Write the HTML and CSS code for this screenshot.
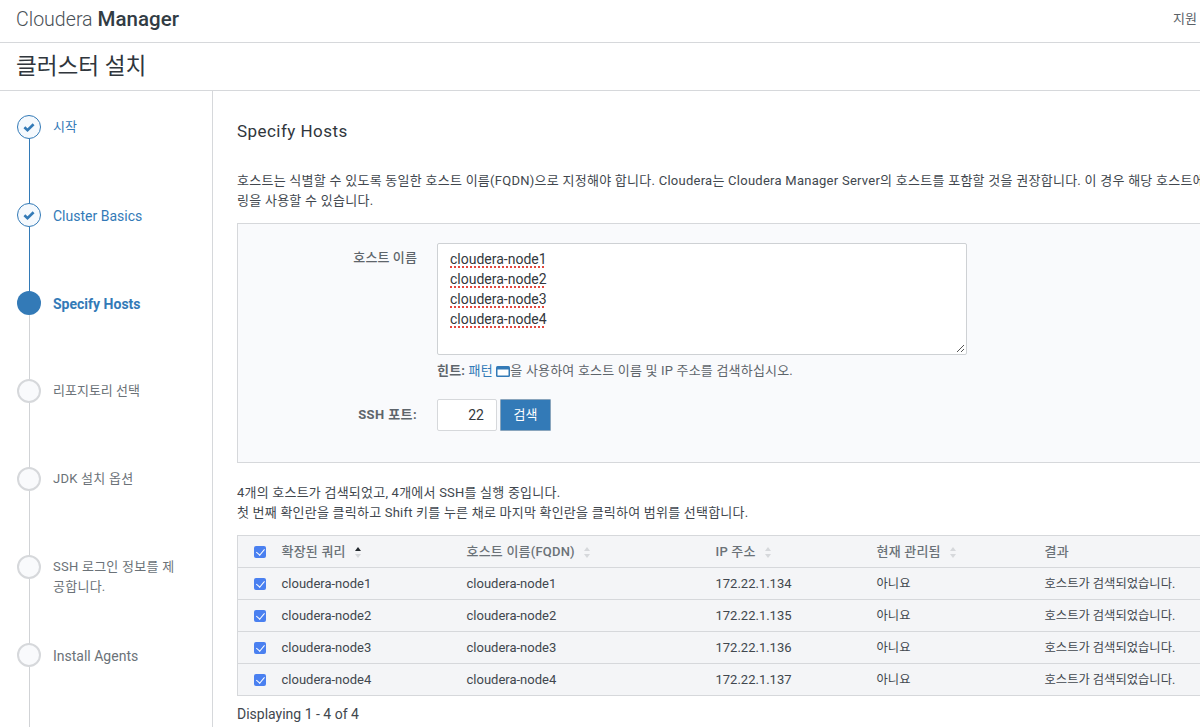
FILE: index.html
```html
<!DOCTYPE html>
<html lang="ko">
<head>
<meta charset="utf-8">
<title>Cloudera Manager</title>
<link rel="stylesheet" href="styles.css">
</head>
<body>
<header class="topbar">
  <div class="logo"><span class="logo-light">Cloudera</span> <span class="logo-bold">Manager</span></div>
  <div class="support">지원</div>
</header>
<div class="titlebar"><h1>클러스터 설치</h1></div>
<div class="layout">
  <nav class="steps">
    <div class="step done">
      <span class="dot"><svg viewBox="0 0 12 12" width="12" height="12"><path d="M1.4 6.2 4.5 9.2 10.6 3.2" fill="none" stroke="#337ab7" stroke-width="2.6"/></svg></span>
      <span class="label">시작</span>
    </div>
    <div class="step done">
      <span class="dot"><svg viewBox="0 0 12 12" width="12" height="12"><path d="M1.4 6.2 4.5 9.2 10.6 3.2" fill="none" stroke="#337ab7" stroke-width="2.6"/></svg></span>
      <span class="label latin">Cluster Basics</span>
    </div>
    <div class="step current">
      <span class="dot"></span>
      <span class="label latin">Specify Hosts</span>
    </div>
    <div class="step"><span class="dot"></span><span class="label">리포지토리 선택</span></div>
    <div class="step"><span class="dot"></span><span class="label mixed">JDK 설치 옵션</span></div>
    <div class="step"><span class="dot"></span><span class="label mixed">SSH 로그인 정보를 제공합니다.</span></div>
    <div class="step"><span class="dot"></span><span class="label latin">Install Agents</span></div>
    <div class="step"><span class="dot"></span><span class="label"></span></div>
  </nav>
  <main class="content">
    <h2>Specify Hosts</h2>
    <p class="intro">호스트는 식별할 수 있도록 동일한 호스트 이름(FQDN)으로 지정해야 합니다. Cloudera는 Cloudera Manager Server의 호스트를 포함할 것을 권장합니다. 이 경우 해당 호스트에서 제공하는 미러<br>링을 사용할 수 있습니다.</p>
    <section class="panel">
      <div class="form-row">
        <label class="form-label host-label">호스트 이름</label>
        <div class="form-field">
          <div class="textarea">
            <div><span class="spell">cloudera-node1</span></div>
            <div><span class="spell">cloudera-node2</span></div>
            <div><span class="spell">cloudera-node3</span></div>
            <div><span class="spell">cloudera-node4</span></div>
            <svg class="grip" viewBox="0 0 10 10" width="10" height="10"><path d="M9 2 2 9M9 6 6 9" stroke="#555" stroke-width="1" fill="none"/></svg>
          </div>
          <p class="hint"><b>힌트:</b> <a>패턴</a> <svg class="win" viewBox="0 0 14 11" width="14" height="11"><rect x="0" y="0" width="14" height="11" rx="1.5" fill="#337ab7"/><rect x="1.5" y="3.5" width="11" height="6" fill="#fff"/></svg>을 사용하여 호스트 이름 및 IP 주소를 검색하십시오.</p>
        </div>
      </div>
      <div class="form-row port-row">
        <label class="form-label">SSH 포트:</label>
        <div class="port-input">22</div>
        <button class="search">검색</button>
      </div>
    </section>
    <p class="found">4개의 호스트가 검색되었고, 4개에서 SSH를 실행 중입니다.<br>첫 번째 확인란을 클릭하고 Shift 키를 누른 채로 마지막 확인란을 클릭하여 범위를 선택합니다.</p>
    <table class="hosts">
      <colgroup><col class="c0"><col class="c1"><col class="c2"><col class="c3"><col class="c4"><col class="c5"></colgroup>
      <thead>
        <tr>
          <th class="check"><input type="checkbox" checked></th>
          <th>확장된 쿼리 <span class="sort asc"></span></th>
          <th>호스트 이름(FQDN) <span class="sort"></span></th>
          <th>IP 주소 <span class="sort"></span></th>
          <th>현재 관리됨 <span class="sort"></span></th>
          <th>결과</th>
        </tr>
      </thead>
      <tbody>
        <tr><td class="check"><input type="checkbox" checked></td><td>cloudera-node1</td><td>cloudera-node1</td><td>172.22.1.134</td><td class="ko">아니요</td><td class="ko">호스트가 검색되었습니다.</td></tr>
        <tr><td class="check"><input type="checkbox" checked></td><td>cloudera-node2</td><td>cloudera-node2</td><td>172.22.1.135</td><td class="ko">아니요</td><td class="ko">호스트가 검색되었습니다.</td></tr>
        <tr><td class="check"><input type="checkbox" checked></td><td>cloudera-node3</td><td>cloudera-node3</td><td>172.22.1.136</td><td class="ko">아니요</td><td class="ko">호스트가 검색되었습니다.</td></tr>
        <tr><td class="check"><input type="checkbox" checked></td><td>cloudera-node4</td><td>cloudera-node4</td><td>172.22.1.137</td><td class="ko">아니요</td><td class="ko">호스트가 검색되었습니다.</td></tr>
      </tbody>
    </table>
    <p class="displaying">Displaying 1 - 4 of 4</p>
  </main>
</div>
</body>
</html>
```

FILE: styles.css
```css
* { box-sizing: border-box; }
html, body { margin: 0; height: 727px; overflow: hidden; }
body {
  font-family: Roboto, "Noto Sans CJK KR", sans-serif;
  font-size: 13px;
  line-height: 20px;
  color: #41474e;
  background: #fff;
}
.topbar {
  height: 43px;
  border-bottom: 1px solid #d6d8db;
  display: flex;
  justify-content: space-between;
  padding: 0 3px 0 16px;
}
.logo { font-size: 20px; line-height: 38px; color: #4a5157; white-space: nowrap; }
.logo-light { font-weight: 300; font-size: 19.6px; }
.logo-bold { font-weight: 500; font-size: 20.5px; color: #323c44; }
.support { font-size: 13px; line-height: 38px; color: #5a6167; }
.titlebar { height: 48px; border-bottom: 1px solid #d6d8db; padding-left: 16px; }
.titlebar h1 { margin: 0; font-size: 22.6px; line-height: 47px; font-weight: 400; color: #30363c; }
.layout { display: flex; height: 636px; }
.steps { width: 213px; flex: none; border-right: 1px solid #d6d8db; padding-top: 24px; overflow: hidden; }
.step { position: relative; height: 88px; display: flex; padding-left: 17px; gap: 12px; color: #6b7278; }
.step::after {
  content: "";
  position: absolute;
  left: 29px;
  top: 24px;
  bottom: -1px;
  width: 1px;
  background: #d1d3d6;
}
.step.done::after { background: #337ab7; }
.dot {
  width: 24px;
  height: 24px;
  flex: none;
  border-radius: 50%;
  border: 2px solid #d6d8db;
  background: #f9fafc;
  display: flex;
  align-items: center;
  justify-content: center;
}
.done .dot { border: 1.5px solid #337ab7; background: #f5f9fd; }
.current .dot { border: 0; background: #337ab7; }
.label { width: 130px; font-size: 13px; line-height: 20px; margin-top: 2px; }
.label.latin { font-size: 14px; margin-top: 3px; }
.label.mixed { letter-spacing: 0.25px; margin-top: 2px; }
.done .label { color: #337ab7; }
.current .label { color: #337ab7; font-weight: 700; }
.content { flex: none; width: 1100px; padding-left: 24px; padding-top: 29px; }
.content h2 { margin: 0; font-size: 17px; line-height: 22px; font-weight: 400; color: #30363c; letter-spacing: 0.45px; }
.intro { margin: 29px 0 0; white-space: nowrap; color: #41474e; line-height: 20px; letter-spacing: 0.26px; }
.panel {
  margin-top: 12px;
  height: 240px;
  background: #f9fafc;
  border: 1px solid #d6d8db;
  padding-top: 19px;
}
.form-row { display: flex; }
.form-label { width: 179px; text-align: right; font-weight: 500; color: #5e656b; flex: none; }
.host-label { line-height: 20px; margin-top: 5px; letter-spacing: 0.1px; }
.form-field { margin-left: 20px; }
.textarea {
  position: relative;
  width: 530px;
  height: 112px;
  background: #fff;
  border: 1px solid #ced1d4;
  border-radius: 2px;
  padding: 5px 12px;
  font-size: 14px;
  line-height: 20px;
  color: #33383d;
}
.spell { text-decoration: underline dotted #e0483e 1.5px; text-underline-offset: 2px; }
.grip { position: absolute; right: 1px; bottom: 1px; }
.hint { margin: 6px 0 0; white-space: nowrap; color: #5e656b; letter-spacing: 0.19px; }
.hint a { color: #337ab7; }
.win { vertical-align: -2px; }
.port-row { margin-top: 18px; align-items: center; }
.port-row .form-label { font-weight: 700; letter-spacing: 0.4px; }
.port-input {
  width: 60px;
  height: 32px;
  margin-left: 20px;
  background: #fff;
  border: 1px solid #d6d8db;
  border-radius: 2px;
  text-align: right;
  padding-right: 12px;
  font-size: 14px;
  line-height: 30px;
  color: #33383d;
}
.search {
  width: 51px;
  height: 32px;
  margin-left: 3px;
  background: #337ab7;
  border: 1px solid #8aa5bd;
  border-radius: 1px;
  color: #fff;
  font: inherit;
  padding: 0;
}
.found { margin: 20px 0 0; color: #41474e; letter-spacing: 0.22px; line-height: 19.5px; }
.hosts { margin-top: 13px; border-collapse: collapse; table-layout: fixed; width: 1040px; border: 1px solid #d6d8db; background: #f4f5f7; }
.c0 { width: 36px; }
.c1 { width: 185px; }
.c2 { width: 249px; }
.c3 { width: 161px; }
.c4 { width: 168px; }
.hosts th, .hosts td {
  height: 32px;
  padding: 0 8px;
  text-align: left;
  font-size: 13px;
  border-bottom: 1px solid #d6d8db;
  white-space: nowrap;
  color: #41474e;
  font-weight: 400;
}
.hosts td.ko { font-size: 12.3px; }
.hosts th { font-weight: 500; font-size: 13px; color: #6b7278; letter-spacing: 0.2px; }
.hosts .check { padding: 0 0 0 16px; }
.hosts input {
  appearance: none;
  position: relative;
  margin: 0;
  width: 12px;
  height: 12px;
  display: block;
  border-radius: 2px;
  background: #4a80f0;
}
.hosts input::before {
  content: "";
  position: absolute;
  left: 4px;
  top: 1.5px;
  width: 3.5px;
  height: 7px;
  border: solid #fff;
  border-width: 0 1.6px 1.6px 0;
  transform: rotate(40deg);
}
.sort { display: inline-block; position: relative; width: 7px; height: 11px; margin-left: 6px; vertical-align: -2px; }
.sort::before, .sort::after {
  content: "";
  position: absolute;
  left: 0;
  border-left: 3.5px solid transparent;
  border-right: 3.5px solid transparent;
}
.sort::before { top: 0; border-bottom: 4.5px solid #d6d8db; }
.sort::after { bottom: 0; border-top: 4.5px solid #d6d8db; }
.sort.asc::before { border-bottom-color: #23292e; }
.displaying { margin: 8px 0 0; color: #41474e; font-size: 14px; }
```
